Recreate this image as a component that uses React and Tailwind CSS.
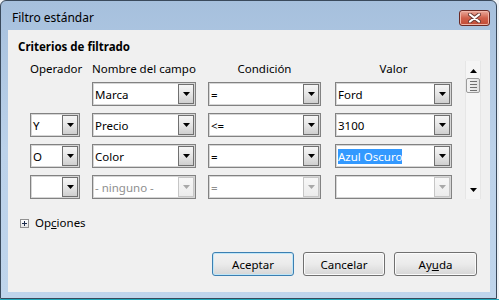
import React from "react";

function Arrow({ disabled }) {
  return (
    <svg width="7" height="4" viewBox="0 0 7 4">
      <path d="M0 0 H7 L3.5 4 Z" fill={disabled ? "#a8a8a8" : "#000"} />
    </svg>
  );
}

function DropBtn({ disabled }) {
  return (
    <div
      className={
        disabled
          ? "w-[16px] h-[20px] mr-[1px] flex items-center justify-center border border-[#c6c6c6] bg-gradient-to-b from-[#f7f7f7] to-[#ececec]"
          : "w-[16px] h-[20px] mr-[1px] flex items-center justify-center border border-[#707070] bg-gradient-to-b from-[#f6f6f6] via-[#e6e6e6] to-[#cfcfcf]"
      }
    >
      <Arrow disabled={disabled} />
    </div>
  );
}

function Combo({ w, text, textDisabled, btnDisabled, selected, fieldDisabled }) {
  return (
    <div
      className={
        (fieldDisabled
          ? "border-[#b8b8b8] shadow-[inset_0_0_0_1px_#e8e8e8] "
          : "border-[#828282] shadow-[inset_0_0_0_1px_#d6d6d6] ") +
        w +
        " h-[24px] flex items-center bg-white border"
      }
    >
      <div className="flex-1 min-w-0 pl-[2px] whitespace-nowrap overflow-hidden leading-[15px]">
        {selected ? (
          <span className="bg-[#3399ff] text-white">{text}</span>
        ) : (
          <span className={textDisabled ? "text-[#8f8f8f]" : "text-black"}>{text}</span>
        )}
      </div>
      <DropBtn disabled={btnDisabled} />
    </div>
  );
}

function Row({ op, opShow, field, cond, val, disabled, selected }) {
  return (
    <div className="flex h-[24px]">
      <div className="w-[50px]">
        {opShow && <Combo w="w-[50px]" text={op} />}
      </div>
      <div className="ml-[12px]">
        <Combo
          w="w-[104px]"
          text={field}
          textDisabled={disabled}
          btnDisabled={disabled}
          fieldDisabled={false}
        />
      </div>
      <div className="ml-[12px]">
        <Combo
          w="w-[113px]"
          text={cond}
          textDisabled={disabled}
          btnDisabled={disabled}
        />
      </div>
      <div className="ml-[14px]">
        <Combo
          w="w-[117px]"
          text={val}
          btnDisabled={disabled}
          selected={selected}
        />
      </div>
    </div>
  );
}

function Btn({ children, def, w }) {
  return (
    <div
      className={
        (def
          ? "border-[#3c7fb1] shadow-[inset_0_0_0_1px_#bfe6f8] "
          : "border-[#707070] shadow-[inset_0_0_0_1px_#fbfbfb] ") +
        w +
        " h-[24px] rounded-[3px] border flex items-center justify-center bg-gradient-to-b from-[#f2f2f2] via-[#ebebeb] to-[#d6d6d6] text-black leading-[15px]"
      }
    >
      {children}
    </div>
  );
}

export default function App() {
  return (
    <div className="w-[499px] h-[300px] bg-[#eef2f6] overflow-hidden flex flex-col font-['Noto_Sans','Open_Sans',sans-serif] text-[11.5px] text-black">
      <div className="w-[497px] h-[299px] flex flex-col border border-[#3a4a5c] rounded-t-[6px] bg-gradient-to-b from-[#a6c0dd] via-[#bcd2ea] to-[#bfd5ec]">
        {/* title bar */}
        <div className="h-[29px] flex items-start">
          <div className="ml-[11px] mt-[9px] leading-[16px] text-[12px] text-black">Filtro estándar</div>
          <div className="ml-auto mr-[6px] mt-[9px] w-[31px] h-[16px] rounded-[3px] border border-[#6b2a25] bg-gradient-to-b from-[#e9a99c] via-[#d0604b] to-[#c04a35] flex items-center justify-center shadow-[inset_0_0_0_1px_#f0b5a8]">
            <svg width="13" height="10" viewBox="0 0 13 10">
              <path d="M2 1.5 L11 8.5 M11 1.5 L2 8.5" stroke="#6c3a35" strokeWidth="4" strokeLinecap="round" />
              <path d="M2 1.5 L11 8.5 M11 1.5 L2 8.5" stroke="#ffffff" strokeWidth="2.2" strokeLinecap="round" />
            </svg>
          </div>
        </div>
        {/* content */}
        <div className="flex pl-[7px] pr-[6px]">
          <div className="w-[482px] h-[262px] bg-[#f0f0f0] flex flex-col">
            <div className="pl-[10px] pt-[10px] leading-[14px] font-bold">Criterios de filtrado</div>
            <div className="flex mt-[7px] pl-[22px]">
              <div className="flex flex-col">
                <div className="flex h-[16px] leading-[16px]">
                  <div className="w-[50px] text-center whitespace-nowrap">Operador</div>
                  <div className="ml-[12px] w-[104px] text-center whitespace-nowrap">Nombre del campo</div>
                  <div className="ml-[12px] w-[113px] text-center">Condición</div>
                  <div className="ml-[14px] w-[117px] text-center">Valor</div>
                </div>
                <div className="flex flex-col gap-[7px] mt-[5px]">
                  <Row opShow={false} field="Marca" cond="=" val="Ford" />
                  <Row opShow op="Y" field="Precio" cond="<=" val="3100" />
                  <Row opShow op="O" field="Color" cond="=" val="Azul Oscuro" selected />
                  <Row opShow op="" field="- ninguno -" cond="=" val="" disabled />
                </div>
              </div>
              {/* scrollbar */}
              <div className="ml-[13px] w-[16px] h-[138px] bg-[#f5f5f5] border-x border-[#e6e6e6] flex flex-col items-center">
                <div className="mt-[8px]">
                  <svg width="7" height="4" viewBox="0 0 7 4">
                    <path d="M0 4 H7 L3.5 0 Z" fill="#000" />
                  </svg>
                </div>
                <div className="mt-[5px] w-[14px] h-[15px] rounded-[2px] border border-[#9b9b9b] bg-gradient-to-r from-[#f4f4f4] to-[#e3e3e3] flex flex-col items-center justify-center gap-[2px]">
                  <div className="w-[7px] h-px bg-[#707070]" />
                  <div className="w-[7px] h-px bg-[#707070]" />
                  <div className="w-[7px] h-px bg-[#707070]" />
                  <div className="w-[7px] h-px bg-[#707070]" />
                </div>
                <div className="mt-auto mb-[7px]">
                  <svg width="7" height="4" viewBox="0 0 7 4">
                    <path d="M0 0 H7 L3.5 4 Z" fill="#000" />
                  </svg>
                </div>
              </div>
            </div>
            {/* opciones */}
            <div className="mt-[16px] h-[16px] flex items-center pl-[12px]">
              <div className="w-[9px] h-[9px] border border-[#919191] bg-gradient-to-b from-white to-[#e6e6e6] relative flex items-center justify-center">
                <svg width="5" height="5" viewBox="0 0 5 5">
                  <path d="M0 2.5 H5 M2.5 0 V5" stroke="#1d2c4c" strokeWidth="1" />
                </svg>
              </div>
              <div className="ml-[6px] leading-[16px]">
                Op<span className="underline">c</span>iones
              </div>
            </div>
            {/* buttons */}
            <div className="mt-[21px] flex justify-end gap-[9px] pr-[13px]">
              <Btn def w="w-[82px]">Aceptar</Btn>
              <Btn w="w-[82px]">Cancelar</Btn>
              <Btn w="w-[83px]">
                <span>
                  Ay<span className="underline">u</span>da
                </span>
              </Btn>
            </div>
          </div>
        </div>
      </div>
      <div className="h-[1px] w-full bg-[#1fa8bb]" />
    </div>
  );
}
